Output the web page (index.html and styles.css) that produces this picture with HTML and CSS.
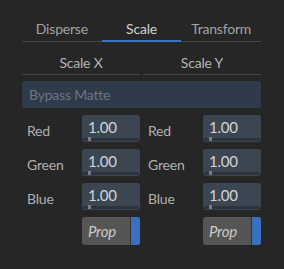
FILE: index.html
```html
<!DOCTYPE html>
<html lang="en">
<head>
    <meta charset="UTF-8">
    <title>Scale</title>
    <link rel="stylesheet" href="styles.css">
</head>
<body>
    <div class="panel">
        <div class="tabs">
            <div class="tab">Disperse</div>
            <div class="tab active">Scale</div>
            <div class="tab">Transform</div>
        </div>

        <div class="subtabs">
            <div class="subtab">Scale X</div>
            <div class="subtab">Scale Y</div>
        </div>

        <div class="bypass">Bypass Matte</div>

        <div class="columns">
            <div class="column">
                <div class="row"><span class="label">Red</span><div class="num">1.00<span class="knob"></span></div></div>
                <div class="row"><span class="label">Green</span><div class="num">1.00<span class="knob"></span></div></div>
                <div class="row"><span class="label">Blue</span><div class="num">1.00<span class="knob"></span></div></div>
                <div class="row"><span class="label"></span><div class="prop"><span class="prop-text">Prop</span><span class="prop-toggle"></span></div></div>
            </div>
            <div class="column">
                <div class="row"><span class="label">Red</span><div class="num">1.00<span class="knob"></span></div></div>
                <div class="row"><span class="label">Green</span><div class="num">1.00<span class="knob"></span></div></div>
                <div class="row"><span class="label">Blue</span><div class="num">1.00<span class="knob"></span></div></div>
                <div class="row"><span class="label"></span><div class="prop"><span class="prop-text">Prop</span><span class="prop-toggle"></span></div></div>
            </div>
        </div>
    </div>
</body>
</html>
```

FILE: styles.css
```css
body {
    margin: 0;
    background: #262626;
    font-family: Lato, "Noto Sans", sans-serif;
    font-size: 14px;
    letter-spacing: -0.2px;
}
.panel {
    padding: 17px 23px 0 22px;
}
.tabs {
    display: flex;
}
.tab {
    flex: 1;
    text-align: center;
    line-height: 24px;
    height: 25px;
    box-sizing: border-box;
    border-bottom: 1px solid #454545;
    color: #a3a3a3;
}
.tab.active {
    color: #d2d2d2;
    border-bottom: 2px solid #3b72c4;
    line-height: 23px;
    margin-bottom: -1px;
}
.subtabs {
    display: flex;
    gap: 3px;
    margin-top: 10px;
}
.subtab {
    flex: 1;
    text-align: center;
    line-height: 22px;
    border-bottom: 1px solid #454545;
    color: #b4b4b4;
}
.bypass {
    margin-top: 6px;
    height: 27px;
    line-height: 27px;
    padding-left: 7px;
    background: #2f3a4a;
    border-radius: 3px;
    color: #6c7684;
}
.columns {
    display: flex;
    gap: 3px;
    margin-top: 7px;
}
.column {
    flex: 1;
    display: flex;
    flex-direction: column;
    gap: 7px;
}
.row {
    display: flex;
    align-items: center;
}
.label {
    width: 55px;
    padding-left: 5px;
    padding-top: 3px;
    color: #b0b0b0;
}
.num {
    position: relative;
    width: 52px;
    height: 27px;
    padding-left: 6px;
    line-height: 24px;
    background: #3c4652;
    border-radius: 3px;
    color: #d4d4d4;
    font-size: 15px;
}
.num::after {
    content: '';
    position: absolute;
    left: 1px;
    right: 1px;
    bottom: 1px;
    height: 3px;
    background: #2c333c;
}
.knob {
    position: absolute;
    left: 6px;
    bottom: 1px;
    width: 3px;
    height: 4px;
    background: #7a7f86;
    z-index: 1;
}
.prop {
    display: flex;
    width: 58px;
    height: 28px;
    border-radius: 3px;
    overflow: hidden;
    background: #555555;
}
.prop-text {
    flex: 1;
    padding-left: 6px;
    line-height: 28px;
    font-size: 15px;
    font-style: italic;
    color: #cacaca;
}
.prop-toggle {
    width: 9px;
    border-left: 1px solid #333;
    background: #3a70c2;
}
```
